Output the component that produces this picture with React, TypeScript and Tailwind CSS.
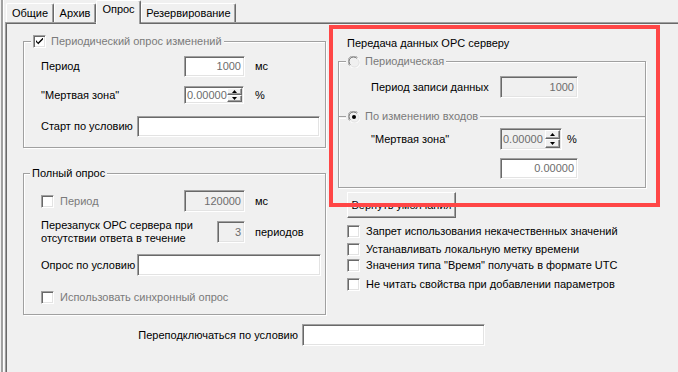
import React from "react";

const FONT = { fontFamily: '"Liberation Sans", Arial, sans-serif' };

function Sunken({ className = "", children }: { className?: string; children?: React.ReactNode }) {
  return (
    <div
      className={
        "border border-t-[#a0a0a0] border-l-[#a0a0a0] border-r-white border-b-white shadow-[inset_1px_1px_0_#696969,inset_-1px_-1px_0_#e3e3e3] " +
        className
      }
    >
      {children}
    </div>
  );
}

function TextBox({
  w,
  h,
  value = "",
  disabled = false,
  greyText = false,
}: {
  w: string;
  h: string;
  value?: string;
  disabled?: boolean;
  greyText?: boolean;
}) {
  return (
    <Sunken
      className={`${w} ${h} flex items-center justify-end pr-[3px] ${disabled ? "bg-[#f0f0f0]" : "bg-white"} ${
        disabled || greyText ? "text-[#6d6d6d]" : "text-black"
      }`}
    >
      <span className="leading-none">{value}</span>
    </Sunken>
  );
}

function SpinBtn({ up }: { up: boolean }) {
  return (
    <div className="flex-1 flex items-center justify-center bg-[#f0f0f0] border border-t-white border-l-white border-r-[#696969] border-b-[#696969] shadow-[inset_-1px_-1px_0_#a0a0a0]">
      <svg width="5" height="3" viewBox="0 0 5 3">
        {up ? <path d="M2.5 0 L5 3 L0 3 Z" fill="#000" /> : <path d="M0 0 L5 0 L2.5 3 Z" fill="#000" />}
      </svg>
    </div>
  );
}

function Spin({ w, h, disabled = false }: { w: string; h: string; disabled?: boolean }) {
  return (
    <Sunken className={`${w} ${h} flex py-px pr-px ${disabled ? "bg-[#f0f0f0]" : "bg-white"}`}>
      <div className="flex-1 min-w-0 flex items-center pl-[2px] text-[#6d6d6d] whitespace-nowrap leading-none">
        0.00000
      </div>
      <div className="w-[15px] shrink-0 flex flex-col">
        <SpinBtn up />
        <SpinBtn up={false} />
      </div>
    </Sunken>
  );
}

function Check({ checked = false }: { checked?: boolean }) {
  return (
    <Sunken className="w-[13px] h-[13px] shrink-0 flex items-center justify-center bg-white">
      {checked && (
        <svg width="7" height="7" viewBox="0 0 7 7">
          <path d="M0 2 L0 4 L2 6 L2 6.5 L7 1.5 L7 -0.5 L2 4.5 Z" fill="#000" />
        </svg>
      )}
    </Sunken>
  );
}

function Radio({ checked = false }: { checked?: boolean }) {
  return (
    <svg width="12" height="12" viewBox="0 0 12 12" className="shrink-0">
      <circle cx="6" cy="6" r="5.5" fill="#f0f0f0" />
      <path d="M1.5 9.5 A5.5 5.5 0 0 1 9.5 1.5" stroke="#a0a0a0" strokeWidth="1" fill="none" />
      <path d="M2.3 8.7 A4.5 4.5 0 0 1 8.7 2.3" stroke="#696969" strokeWidth="1" fill="none" />
      <path d="M10.5 2.5 A5.5 5.5 0 0 1 2.5 10.5" stroke="#ffffff" strokeWidth="1" fill="none" />
      <path d="M9.7 3.3 A4.5 4.5 0 0 1 3.3 9.7" stroke="#e3e3e3" strokeWidth="1" fill="none" />
      {checked && <circle cx="6" cy="6" r="2" fill="#000" />}
    </svg>
  );
}

const groupCls =
  "relative border border-[#a0a0a0] shadow-[inset_1px_1px_0_#ffffff,1px_1px_0_#ffffff]";

function Tab({ label, w, selected = false }: { label: string; w: string; selected?: boolean }) {
  return (
    <div
      className={`${w} flex justify-center border-l border-t border-white border-r border-r-[#696969] rounded-t-[2px] shadow-[inset_-1px_0_0_#a0a0a0] bg-[#f0f0f0] ${
        selected ? "h-[24px] -mb-[2px] relative z-10 pt-[3px] items-start" : "h-[19px] items-center"
      }`}
    >
      <span className="leading-none">{label}</span>
    </div>
  );
}

export default function App() {
  return (
    <div style={FONT} className="w-[678px] h-[372px] bg-[#f0f0f0] overflow-hidden flex relative text-[11px] text-black">
      <div className="w-px" />
      <div className="w-[2px] bg-[#a0a0a0]" />
      <div className="w-px bg-white" />
      <div className="flex-1 flex flex-col pl-px">
        {/* Tabs */}
        <div className="h-[22px] flex items-end pl-px">
          <Tab label="Общие" w="w-[48px]" />
          <Tab label="Архив" w="w-[42px]" />
          <Tab label="Опрос" w="w-[45px]" selected />
          <Tab label="Резервирование" w="w-[95px]" />
        </div>
        {/* Page */}
        <div className="flex-1 border-t border-l border-[#a0a0a0] shadow-[inset_1px_1px_0_#696969] pt-px pl-px flex flex-col">
          <div className="flex">
            {/* Left column */}
            <div className="ml-[16px] w-[303px] pt-[17px] flex flex-col">
              {/* Group 1 */}
              <div className={`${groupCls} h-[107px] pl-[17px] pt-[14px] flex flex-col`}>
                <div className="absolute left-[7px] top-[-7px] px-[2px] bg-[#f0f0f0] flex items-center gap-[5px] h-[13px]">
                  <Check checked />
                  <span className="text-[#7a7a7a] leading-none">Периодический опрос изменений</span>
                </div>
                <div className="flex items-center h-[21px]">
                  <span className="w-[143px]">Период</span>
                  <TextBox w="w-[61px]" h="h-[21px]" value="1000" greyText />
                  <span className="ml-[10px]">мс</span>
                </div>
                <div className="flex items-center h-[18px] mt-[9px]">
                  <span className="w-[143px]">"Мертвая зона"</span>
                  <Spin w="w-[60px]" h="h-[18px]" />
                  <span className="ml-[11px]">%</span>
                </div>
                <div className="flex items-center h-[21px] mt-[12px]">
                  <span className="w-[96px]">Старт по условию</span>
                  <TextBox w="w-[183px]" h="h-[21px]" />
                </div>
              </div>
              {/* Group 2 */}
              <div className={`${groupCls} h-[142px] mt-[25px] pl-[17px] pt-[16px] flex flex-col`}>
                <div className="absolute left-[6px] top-[-7px] px-[2px] bg-[#f0f0f0] h-[13px] flex items-center">
                  <span className="leading-none">Полный опрос</span>
                </div>
                <div className="flex items-center h-[22px]">
                  <div className="w-[143px] flex items-center gap-[6px]">
                    <Check />
                    <span className="text-[#7a7a7a]">Период</span>
                  </div>
                  <TextBox w="w-[61px]" h="h-[22px]" value="120000" disabled />
                  <span className="ml-[10px]">мс</span>
                </div>
                <div className="flex items-center h-[22px] mt-[9px]">
                  <span className="w-[176px] leading-[13px]">
                    Перезапуск OPC сервера при
                    <br />
                    отсутствии ответа в течение
                  </span>
                  <TextBox w="w-[28px]" h="h-[22px]" value="3" disabled />
                  <span className="ml-[10px]">периодов</span>
                </div>
                <div className="flex items-center h-[22px] mt-[11px]">
                  <span className="w-[96px]">Опрос по условию</span>
                  <TextBox w="w-[184px]" h="h-[22px]" />
                </div>
                <div className="flex items-center h-[13px] mt-[15px] gap-[6px]">
                  <Check />
                  <span className="text-[#7a7a7a]">Использовать синхронный опрос</span>
                </div>
              </div>
            </div>
            {/* Right column */}
            <div className="ml-[12px] w-[308px] pt-[13px] flex flex-col">
              <div className="pl-[9px] leading-[13px]">Передача данных OPC серверу</div>
              <div className={`${groupCls} h-[127px] mt-[11px] pt-[14px] flex flex-col`}>
                <div className="absolute left-[7px] top-[-7px] px-[2px] bg-[#f0f0f0] h-[13px] flex items-center gap-[5px]">
                  <Radio />
                  <span className="text-[#7a7a7a] leading-none">Периодическая</span>
                </div>
                <div className="flex items-center h-[22px] pl-[32px]">
                  <span className="w-[129px]">Период записи данных</span>
                  <TextBox w="w-[78px]" h="h-[22px]" value="1000" disabled />
                </div>
                <div className="relative mt-[18px] h-[2px] border-t border-[#a0a0a0] shadow-[0_1px_0_#ffffff]">
                  <div className="absolute left-[7px] top-[-7px] px-[2px] bg-[#f0f0f0] h-[13px] flex items-center gap-[5px]">
                    <Radio checked />
                    <span className="text-[#7a7a7a] leading-none">По изменению входов</span>
                  </div>
                </div>
                <div className="flex items-center h-[22px] pl-[32px] mt-[10px]">
                  <span className="w-[129px]">"Мертвая зона"</span>
                  <Spin w="w-[62px]" h="h-[22px]" disabled />
                  <span className="ml-[5px]">%</span>
                </div>
                <div className="flex items-center h-[21px] pl-[161px] mt-[8px]">
                  <TextBox w="w-[78px]" h="h-[21px]" value="0.00000" greyText />
                </div>
              </div>
              <div className="ml-[9px] mt-[4px] w-[109px] h-[26px] flex items-center justify-center border border-t-white border-l-white border-r-[#696969] border-b-[#696969] shadow-[inset_-1px_-1px_0_#a0a0a0]">
                Вернуть умолчания
              </div>
              <div className="ml-[9px] mt-[7px] flex items-center h-[13px] gap-[6px]">
                <Check />
                <span>Запрет использования некачественных значений</span>
              </div>
              <div className="ml-[9px] mt-[5px] flex items-center h-[13px] gap-[6px]">
                <Check />
                <span>Устанавливать локальную метку времени</span>
              </div>
              <div className="ml-[9px] mt-[3px] flex items-center h-[13px] gap-[6px]">
                <Check />
                <span>Значения типа "Время" получать в формате UTC</span>
              </div>
              <div className="ml-[9px] mt-[6px] flex items-center h-[13px] gap-[6px]">
                <Check />
                <span>Не читать свойства при добавлении параметров</span>
              </div>
            </div>
          </div>
          {/* Bottom row */}
          <div className="flex items-center mt-[9px] h-[22px]">
            <span className="w-[291px] text-right">Переподключаться по условию</span>
            <div className="ml-[4px]">
              <TextBox w="w-[183px]" h="h-[22px]" />
            </div>
          </div>
        </div>
      </div>
      {/* Red highlight annotation */}
      <div className="absolute left-[329px] top-[25px] w-[331px] h-[182px] border-4 border-[#ff4646] pointer-events-none" />
    </div>
  );
}
